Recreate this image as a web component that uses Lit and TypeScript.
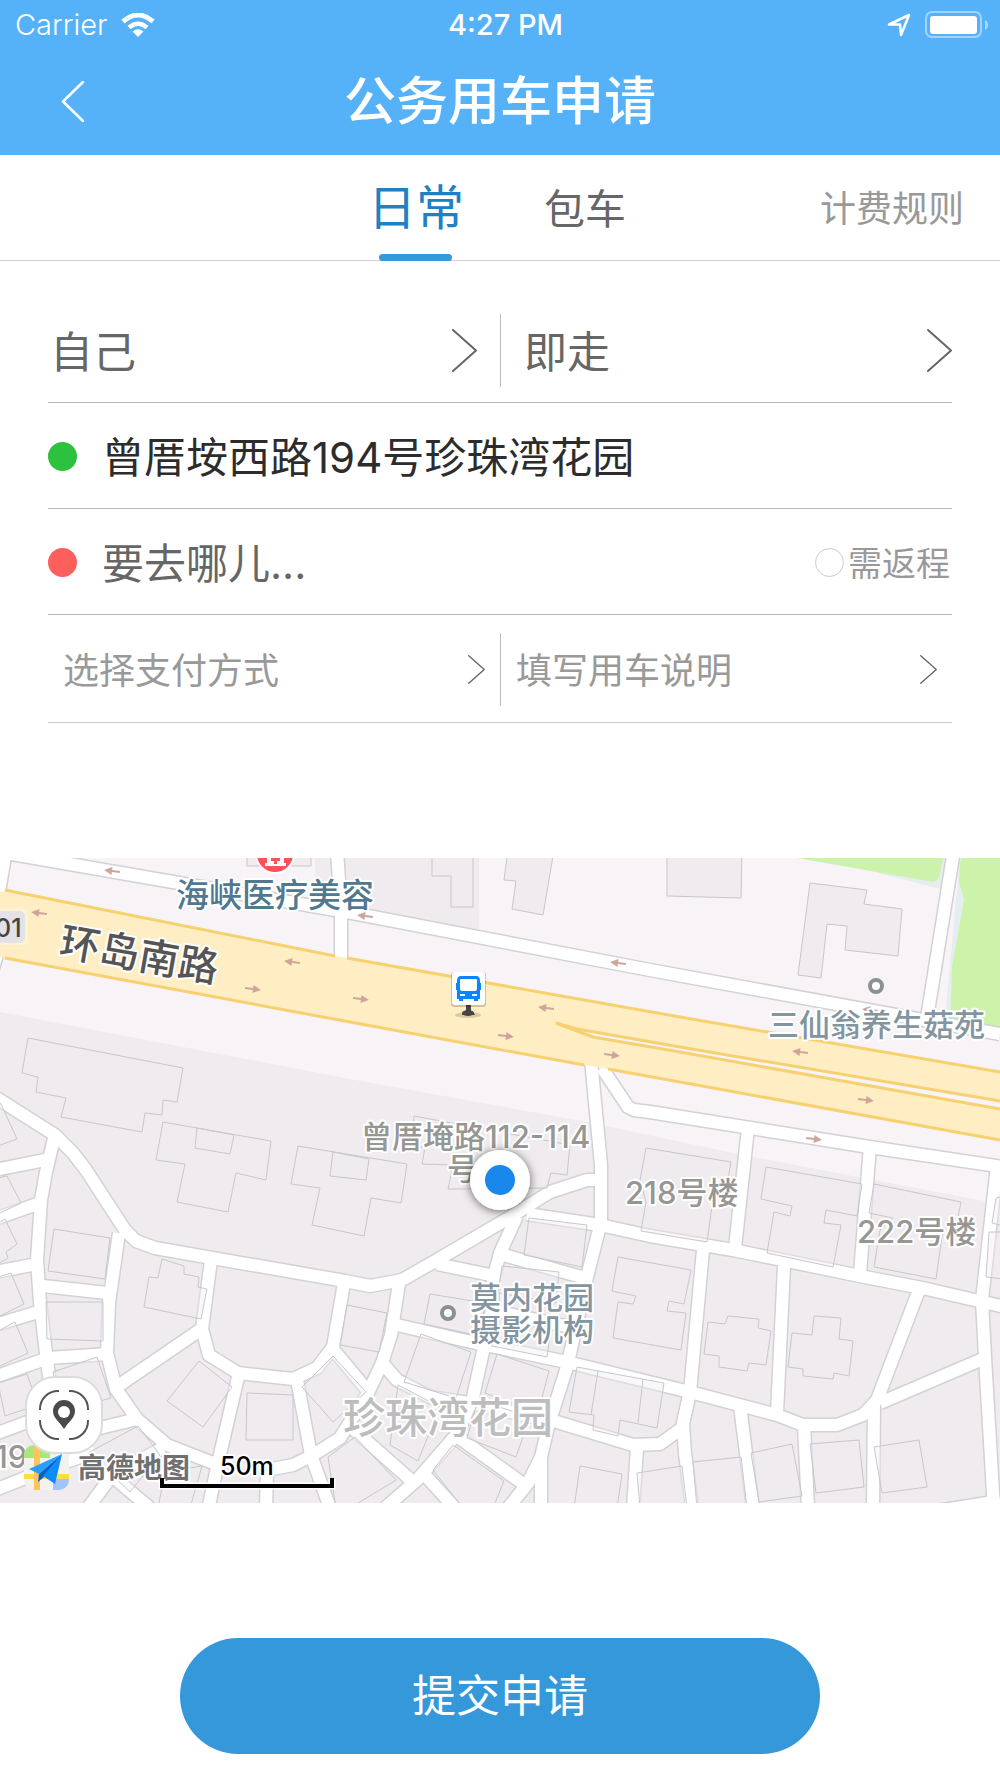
import { LitElement, html, css, svg } from "lit";
import { customElement, state } from "lit/decorators.js";

const roads: string[] = [
  // north side
  "0,852 12,854 173,882 347,912 650,970 1000,1034",
  "6,850 -1,892 -4,958 -12,985",
  "337,850 341,912 341,960",
  "954,850 927,1018",
  // service road south of the avenue
  "591,1060 601,1165 601,1222 587,1277 567,1367 548,1427 541,1457 528,1483 508,1508",
  "602,1068 628,1107 634,1110 650,1112 863,1146 1010,1168",
  "748,1128 735,1248",
  "870,1146 860,1274",
  "997,1166 982,1300 985,1357 994,1510",
  // ring road through the estate
  "-5,1097 55,1135 73,1153 86,1170 125,1230 136,1241 155,1248 345,1281 370,1286 402,1280 437,1260 507,1219 550,1192 587,1180 601,1180",
  "527,1214 600,1225 650,1236 733,1250 860,1276 927,1289 983,1302 1010,1308",
  // west lanes
  "54,1138 46,1172 41,1200 37,1260 40,1303 46,1353 52,1400",
  "-5,1170 45,1160",
  "-5,1219 40,1203",
  "-5,1272 37,1264",
  "-5,1325 38,1312",
  "-5,1377 48,1358 108,1354",
  "-5,1434 30,1421 100,1428 137,1419",
  "-5,1490 60,1464 95,1452",
  "43,1286 107,1293",
  "119,1233 109,1303 107,1353 116,1389 137,1419 167,1445 213,1463",
  "118,1386 200,1330",
  "211,1260 202,1329 209,1355 238,1373 293,1379 317,1368 333,1347 344,1283",
  "239,1373 218,1463 208,1510",
  "297,1380 311,1455 330,1508",
  "267,1470 293,1465 313,1455 340,1438 367,1395 382,1363 391,1335 399,1283",
  "267,1472 266,1508",
  "332,1348 367,1390",
  "88,1508 113,1474 163,1448",
  "112,1476 150,1508",
  // photo studio quarter
  "397,1325 480,1344 567,1362 690,1392 777,1415 803,1425 837,1425 863,1415 877,1400 919,1290",
  "384,1365 397,1380 430,1397 475,1404 557,1422 633,1445 660,1444 682,1428 690,1392",
  "517,1216 500,1253 493,1280 492,1310 484,1347 473,1397 458,1433 417,1480 385,1508",
  "437,1264 490,1275",
  "500,1254 585,1278",
  "490,1310 575,1328",
  "352,1428 413,1482",
  "424,1474 455,1508",
  "458,1437 522,1483",
  "541,1457 541,1508",
  // east quarter
  "703,1250 690,1392 683,1423 685,1453 692,1508",
  "784,1266 777,1413",
  "880,1403 985,1358",
  "874,1405 873,1508",
  "740,1406 753,1508",
  "804,1425 808,1508",
  "637,1447 633,1508",
  "930,1512 1000,1501",
];

const upperBuildings: string[] = [
  "247,850 311,850 311,866 247,866",
  "432,850 432,876 451,876 451,907 473,907 473,850",
  "508,850 504,880 516,881 512,909 543,915 554,850",
  "667,850 667,896 741,898 742,850",
  "810,883 867,890 864,904 902,909 898,956 845,950 847,926 827,924 821,978 798,975",
];

const buildings: string[] = [
  "28,1038 183,1068 177,1102 163,1100 162,1115 145,1113 142,1132 61,1117 66,1098 36,1092 38,1077 22,1073",
  "163,1122 271,1141 266,1180 236,1173 228,1212 177,1202 185,1164 156,1160",
  "197,1128 195,1148 230,1154 234,1135",
  "298,1146 407,1164 401,1203 371,1198 364,1236 312,1225 320,1188 291,1184",
  "333,1152 330,1176 366,1180 369,1159",
  "414,1116 570,1145 567,1175 551,1173 547,1188 448,1189 453,1165 422,1164 425,1148 411,1145",
  "646,1148 731,1162 726,1190 712,1206 707,1242 641,1231 646,1202 640,1180",
  "766,1167 862,1184 857,1216 826,1210 824,1223 841,1225 833,1267 767,1253 774,1212 790,1216 792,1206 761,1199",
  "874,1184 961,1202 958,1217 943,1230 936,1279 874,1267 880,1230 893,1218 869,1213",
  "618,1257 691,1270 684,1304 669,1301 667,1311 686,1313 681,1350 613,1338 618,1302 633,1304 636,1296 612,1291",
  "708,1322 725,1324 728,1316 759,1319 758,1328 771,1331 766,1365 749,1363 747,1371 719,1367 719,1356 704,1354",
  "792,1333 812,1335 814,1316 841,1318 839,1339 853,1341 849,1376 834,1373 833,1379 803,1376 803,1369 788,1367",
  "54,1229 110,1238 105,1279 48,1271",
  "46,1302 103,1302 103,1341 47,1339",
  "162,1259 184,1266 184,1274 199,1277 198,1287 207,1289 201,1319 144,1307 149,1277 158,1278",
  "199,1361 232,1387 203,1427 167,1401",
  "247,1393 293,1395 293,1440 246,1440",
  "333,1356 302,1387 333,1422 366,1392",
  "53,1372 97,1357 111,1398 60,1412",
  "-2,1383 27,1374 38,1405 5,1416",
  "-2,1331 15,1322 28,1353 -2,1367",
  "-2,1277 11,1273 24,1304 -2,1317",
  "-2,1223 5,1219 17,1244 6,1252 8,1258 -2,1264",
  "-2,1178 7,1176 21,1203 -2,1214",
  "-2,1100 2,1106 17,1139 -2,1146",
  "529,1218 587,1225 582,1267 524,1255",
  "502,1266 559,1272 556,1303 498,1293",
  "430,1294 485,1303 480,1336 424,1324",
  "421,1334 471,1352 456,1398 404,1382",
  "497,1354 549,1371 538,1413 485,1393",
  "494,1318 551,1328 547,1357 492,1346",
  "347,1305 387,1313 379,1352 340,1345",
  "577,1367 664,1383 657,1428 620,1420 618,1436 593,1430 594,1415 569,1412",
  "398,1385 440,1407 418,1461 390,1445",
  "478,1400 530,1417 516,1457 467,1438",
  "453,1445 504,1481 493,1508 463,1508 433,1470",
  "580,1466 622,1474 617,1508 574,1508",
  "637,1473 682,1466 687,1508 640,1508",
  "693,1462 741,1457 747,1508 697,1508",
  "751,1453 792,1444 802,1496 759,1502",
  "810,1444 859,1440 864,1487 816,1493",
  "874,1447 919,1440 927,1487 882,1493",
  "996,1198 992,1223 1004,1226 1004,1196",
  "989,1232 986,1277 1004,1279 1004,1232",
  "355,1437 396,1480 350,1508 336,1508 328,1457",
  "138,1426 160,1455 130,1492 88,1453",
  "165,1472 202,1466 190,1508 158,1508",
];

type Arrow = [number, number, number];
const arrows: Arrow[] = [
  [112, 871, 188], [39, 913, 188], [292, 962, 188], [365, 916, 188],
  [618, 963, 188], [546, 1008, 188], [800, 1052, 188], [870, 1010, 188],
  [253, 989, 8], [361, 999, 8], [506, 1036, 8], [612, 1055, 8],
  [866, 1100, 8], [814, 1139, 8],
];

@customElement("city-map")
class CityMap extends LitElement {
  static styles = css`
    :host { display: block; position: relative; }
    .canvas { display: block; width: 100%; height: auto; }
    .casing { fill: none; stroke: #d2d2d4; stroke-width: 15; stroke-linejoin: round; }
    .lane { fill: none; stroke: #fff; stroke-width: 12; stroke-linejoin: round; }
    .block { fill: #efebef; }
    .tower { fill: #efebef; stroke: #c6c7cd; }
    .house { fill: #efebef; fill-opacity: 0.4; stroke: #c6c8ce; }
    .edge { fill: none; stroke: #f7d070; stroke-width: 3; }
    text {
      font-family: Inter, "Noto Sans CJK SC", sans-serif;
      font-weight: 500; paint-order: stroke; stroke: #fff; stroke-width: 4;
      stroke-linejoin: round;
    }
    .clinic { font-size: 33px; fill: #50788f; }
    .avenue { font-size: 40px; fill: #555; }
    .poi { font-size: 31px; fill: #8395a0; }
    .address { font-size: 31px; fill: #969693; }
    .estate { font-size: 42px; fill: #bdbdbd; }
    .shield { font-size: 25px; fill: #444; stroke: none; }
    .brand { font-size: 28px; font-weight: 700; fill: #707070; }
    .scale { font-size: 25px; fill: #000; }
    .locate {
      position: absolute; left: 25px; bottom: 49px; width: 78px; height: 78px;
      padding: 0; border: 2px solid #dcdcdc; border-radius: 30px; background: #fff;
      display: grid; place-items: center;
    }
    .locate svg { width: 50px; height: 50px; }
  `;

  render() {
    return html`
      <svg class="canvas" viewBox="0 858 1000 645" role="img" aria-label="地图">
        <rect y="858" width="1000" height="645" fill="#f7f3f7" />
        <path d="M790 850 940 889 950 850Z" fill="#e4eeee" />
        <path d="M797 850V858L928 881Q937 883 939 877L945 850Z" fill="#cdf2aa" />
        <path d="M960 850 958 885 956 900 945 1020H1000V850Z" fill="#e4eeee" />
        <path d="M965 850 960 863 959 882 964 900 952 967 950 1030H1000V850Z" fill="#cdf2aa" />
        <path class="block" d="M315 850H479V930L315 900Z" />
        <path class="block" d="M0 1012 350 1079 587 1122 738 1154 863 1178 1000 1204V1503H0Z" />
        ${upperBuildings.map((p) => svg`<polygon class="tower" points=${p} />`)}
        ${roads.map((p) => svg`<polyline class="casing" points=${p} />`)}
        ${roads.map((p) => svg`<polyline class="lane" points=${p} />`)}
        ${buildings.map((p) => svg`<polygon class="house" points=${p} />`)}
        <path class="house" d="M598 1371 591 1415M643 1379 638 1423" />

        <path d="M0 892 7 891 335 956 347 958 680 1017 1000 1072V1140L680 1082 585 1065 350 1022 5 958 0 957Z" fill="#ffeec4" />
        <path d="M577 1029 680 1047 1000 1101V1109L680 1052 593 1037Z" fill="#f7f3f7" />
        <path class="edge" d="M5 890 335 956M347 958 680 1017 1000 1072" />
        <path class="edge" d="M5 958 350 1022 584 1065M608 1069 680 1082 1000 1140" />
        <path class="edge" d="M556 1023 577 1029 680 1047 1000 1101" stroke-linejoin="round" />
        <path class="edge" d="M556 1023 593 1037 680 1052 1000 1109" stroke-linejoin="round" />

        ${arrows.map(([x, y, r]) => svg`
          <path transform="translate(${x} ${y}) rotate(${r})" d="M-8-1H0V-4L8 0 0 4V1H-8Z" fill="#cfa59b" />`)}

        <rect x="-20" y="908" width="48" height="37" rx="7" fill="#fff3d5" />
        <rect x="-20" y="911" width="45" height="32" rx="5" fill="#e4e2e6" />
        <text class="shield" x="-5" y="937">01</text>

        <circle cx="275" cy="854" r="20" fill="#fff" />
        <circle cx="275" cy="854" r="18" fill="#fb5258" />
        <path d="M265 866H286V863H284V850H267V863H265Z" fill="#fff" />
        <path d="M274 855H277V858H280V861H277V864H274V861H271V858H274Z" fill="#fb5258" />

        <g fill="#fff" stroke="#8b9190" stroke-width="4">
          <circle cx="876" cy="986" r="6" />
          <circle cx="448" cy="1313" r="6" />
        </g>

        <text class="clinic" x="176" y="907">海峡医疗美容</text>
        <text class="avenue" transform="translate(58 955) rotate(10)">环岛南路</text>
        <text class="poi" x="768" y="1036">三仙翁养生菇苑</text>
        <text class="address" x="361" y="1148">曾厝埯路112-114</text>
        <text class="address" x="447" y="1180">号</text>
        <text class="address" x="625" y="1204">218号楼</text>
        <text class="address" x="857" y="1243">222号楼</text>
        <text class="poi" x="470" y="1309">莫内花园</text>
        <text class="poi" x="470" y="1341">摄影机构</text>
        <text class="estate" x="343" y="1433">珍珠湾花园</text>
        <text class="address" x="-5" y="1468">19</text>

        <ellipse cx="468" cy="1015" rx="13" ry="3" fill="#000" opacity=".15" />
        <path d="M466 1004H471V1011Q474 1012 475 1015H462Q463 1012 466 1011Z" fill="#444" />
        <ellipse cx="468" cy="1013" rx="6" ry="3" fill="#444" />
        <rect x="451" y="972" width="35" height="35" rx="3" fill="#000" opacity=".18" />
        <rect x="452" y="972" width="33" height="33" rx="3" fill="#fff" />
        <path fill="#0a84ff" fill-rule="evenodd" d="M461 976H476Q480 976 480 981V983H481V990H480V999H478V1001H474V999H463V1001H459V999H457V990H456V983H457V981Q457 976 461 976ZM461 979Q460 979 460 980V989Q460 991 462 991H475Q477 991 477 989V980Q477 979 476 979ZM460 994V996H465V994ZM472 994V996H477V994Z" />

        <defs>
          <filter id="shade" x="-50%" y="-50%" width="200%" height="200%">
            <feDropShadow dx="0" dy="1" stdDeviation="5" flood-opacity=".6" />
          </filter>
          <clipPath id="tile"><rect x="24" y="1445" width="45" height="45" rx="10" /></clipPath>
        </defs>
        <circle cx="500" cy="1180" r="30" fill="#fff" filter="url(#shade)" />
        <circle cx="500" cy="1180" r="15" fill="#1a87eb" />

        <g clip-path="url(#tile)">
          <rect x="24" y="1445" width="45" height="45" fill="#f3f2ec" />
          <path d="M24 1445H50V1458H24Z" fill="#a9e67c" />
          <path d="M53 1490V1478H69V1490Z" fill="#9fc5ff" />
          <path d="M24 1474H69V1479H24Z" fill="#ffdd4a" />
          <path d="M34 1445H40V1490H34Z" fill="#ffc55c" />
        </g>
        <path d="M62 1454 29 1469 39 1474Z" fill="#27a0ff" />
        <path d="M62 1454 39 1474 38 1482 44 1477Z" fill="#0a5fc0" />
        <path d="M62 1454 43 1476 55 1484Z" fill="#0d8bff" />
        <text class="brand" x="78" y="1478">高德地图</text>
        <path d="M162 1479V1486H332V1479" fill="none" stroke="#fff" stroke-width="7" />
        <path d="M162 1478V1486H332V1478" fill="none" stroke="#000" stroke-width="4" />
        <text class="scale" x="220" y="1475">50m</text>
      </svg>
      <button class="locate" type="button" aria-label="定位">
        <svg viewBox="0 0 50 50" fill="none" stroke="#555" stroke-width="2">
          <path d="M1 20V19C1 9 9 1 19 1H20M30 1H31C41 1 49 9 49 19V20M49 30V31C49 41 41 49 31 49H30M20 49H19C9 49 1 41 1 31V30" />
          <path d="M25 39C20 31 14 28 14 21A11 11 0 0 1 36 21C36 28 30 31 25 39Z" fill="#4a4a4a" stroke="none" />
          <circle cx="25" cy="22" r="6" fill="#fff" stroke="none" />
        </svg>
      </button>
    `;
  }
}

@customElement("app-root")
class AppRoot extends LitElement {
  @state() private tab = "日常";

  static styles = css`
    :host {
      display: block; background: #fff; color: #666; line-height: 1.2;
      font-family: Inter, "Noto Sans CJK SC", sans-serif;
    }
    button, input { font: inherit; color: inherit; }
    button { padding: 0; border: 0; background: none; cursor: pointer; text-align: left; }
    a { color: inherit; text-decoration: none; }
    svg { display: block; }

    .top { background: #55b1f8; color: #fff; }
    .status {
      display: grid; grid-template-columns: 1fr auto 1fr; align-items: center;
      height: 50px; padding: 0 12px 0 15px; font-size: 29px;
    }
    .carrier { display: flex; align-items: center; gap: 14px; font-weight: 300; }
    .clock { padding-left: 8px; font-weight: 500; }
    .power { display: flex; align-items: center; justify-content: flex-end; gap: 14px; }
    .nav {
      display: grid; grid-template-columns: 1fr auto 1fr; align-items: center;
      height: 105px;
    }
    .back { justify-self: start; padding: 20px 24px 20px 61px; }
    .title { margin: 0; font-size: 52px; font-weight: 500; }

    .tabs {
      display: grid; grid-template-columns: 1fr auto 1fr; align-items: center;
      height: 105px; border-bottom: 1px solid #cfcfd4; color: #666;
    }
    .pair { grid-column: 2; display: flex; gap: 80px; height: 106px; padding-right: 6px; }
    .tab { position: relative; padding-top: 4px; font-size: 41px; }
    .tab.on { padding-top: 0; font-size: 48px; color: #2080c4; }
    .tab.on::after {
      content: ""; position: absolute; left: 50%; bottom: 0; width: 73px; height: 7px;
      margin-left: -37px; border-radius: 4px; background: #3598db;
    }
    .rules { justify-self: end; padding: 4px 36px 0 0; font-size: 36px; color: #999; }

    .form { padding: 36px 48px 0; }
    .row {
      box-sizing: border-box; display: flex; align-items: center; height: 106px;
      padding-top: 2px; border-bottom: 1px solid #b8b8b8; font-size: 42px;
    }
    .row.last { height: 108px; border-color: #ccc; }
    .half { flex: none; width: 50%; display: flex; align-items: center; justify-content: space-between; }
    .half span { padding-top: 4px; }
    .half + .half { border-left: 1px solid #bbb; height: 73px; }
    .big { font-size: 43px; padding: 0 23px 0 2px; }
    .big + .big { padding: 0 0 0 23px; }
    .small { font-size: 36px; color: #999; padding: 0 15px; }
    .dot { width: 29px; height: 29px; margin-right: 25px; border-radius: 50%; flex: none; }
    .from { background: #2cc13f; }
    .to { background: #fd5f5d; }
    .place { padding-top: 4px; color: #2c2c2c; }
    .where { flex: 1; min-width: 0; padding: 4px 0 0; border: 0; outline: 0; background: none; }
    .where::placeholder { color: #666; opacity: 1; }
    .return { display: flex; align-items: center; gap: 4px; padding-right: 2px; font-size: 34px; color: #999; }
    .return span { padding-top: 4px; }
    .tick {
      appearance: none; width: 29px; height: 29px; margin: 0; flex: none;
      border: 1px solid #ccc; border-radius: 50%; background: #fff;
    }
    .tick:checked { background: #3598db; }

    .map { margin-top: 135px; }
    .foot { padding: 135px 18% 24px; }
    .submit {
      width: 100%; height: 116px; border-radius: 58px; background: #3598db;
      color: #fff; font-size: 44px; text-align: center;
    }
  `;

  private chevron(width: number, height: number, stroke: number) {
    return html`<svg width=${width} height=${height} viewBox="0 0 25 43" fill="none" stroke="#666"
      stroke-width=${stroke} stroke-linecap="round" stroke-linejoin="round" aria-hidden="true">
      <path d="M1 1 24 21.500 1 42" />
    </svg>`;
  }

  private tabButton(name: string) {
    return html`<button class="tab ${this.tab === name ? "on" : ""}" type="button" role="tab"
      aria-selected=${this.tab === name} @click=${() => (this.tab = name)}>${name}</button>`;
  }

  render() {
    return html`
      <header class="top">
        <div class="status">
          <div class="carrier">
            <span>Carrier</span>
            <svg width="34" height="24" viewBox="0 0 34 24" fill="none" stroke="#fff" stroke-width="5">
              <path d="M2 8.500Q17-4.500 32 8.500" />
              <path d="M8 14.500Q17 7 26 14.500" stroke-width="4.500" />
              <path d="M11.500 18.500Q17 14 22.500 18.500L17 24Z" fill="#fff" stroke="none" />
            </svg>
          </div>
          <span class="clock">4:27 PM</span>
          <div class="power">
            <svg width="24" height="24" viewBox="0 0 24 24" fill="none" stroke="#fff" stroke-width="2.500" stroke-linejoin="round">
              <path d="M2 11.500 22 2 14 22 13 11.500Z" />
            </svg>
            <svg width="63" height="28" viewBox="0 0 63 28">
              <rect x="1" y="1" width="55" height="25" rx="6" fill="none" stroke="#fff" stroke-width="2" opacity=".45" />
              <rect x="5" y="5" width="47" height="18" rx="3" fill="#fff" />
              <path d="M60 9Q63 10 63 14T60 19Z" fill="#fff" opacity=".5" />
            </svg>
          </div>
        </div>
        <div class="nav">
          <button class="back" type="button" aria-label="返回">
            <svg width="24" height="43" viewBox="0 0 24 43" fill="none" stroke="#fff" stroke-width="2.500" stroke-linecap="round" stroke-linejoin="round">
              <path d="M22 1 2 20.500 22 40" />
            </svg>
          </button>
          <h1 class="title">公务用车申请</h1>
        </div>
      </header>

      <nav class="tabs">
        <div class="pair" role="tablist">${this.tabButton("日常")}${this.tabButton("包车")}</div>
        <a class="rules" href="#rules">计费规则</a>
      </nav>

      <form class="form" @submit=${(e: Event) => e.preventDefault()}>
        <div class="row">
          <button class="half big" type="button"><span>自己</span>${this.chevron(25, 43, 2)}</button>
          <button class="half big" type="button"><span>即走</span>${this.chevron(25, 43, 2)}</button>
        </div>
        <div class="row">
          <span class="dot from"></span>
          <button class="place" type="button">曾厝垵西路194号珍珠湾花园</button>
        </div>
        <div class="row">
          <span class="dot to"></span>
          <input class="where" type="text" placeholder="要去哪儿..." aria-label="目的地" />
          <label class="return"><input class="tick" type="checkbox" /><span>需返程</span></label>
        </div>
        <div class="row last">
          <button class="half small" type="button"><span>选择支付方式</span>${this.chevron(17, 29, 2)}</button>
          <button class="half small" type="button"><span>填写用车说明</span>${this.chevron(17, 29, 2)}</button>
        </div>
      </form>

      <city-map class="map"></city-map>

      <footer class="foot">
        <button class="submit" type="button">提交申请</button>
      </footer>
    `;
  }
}
